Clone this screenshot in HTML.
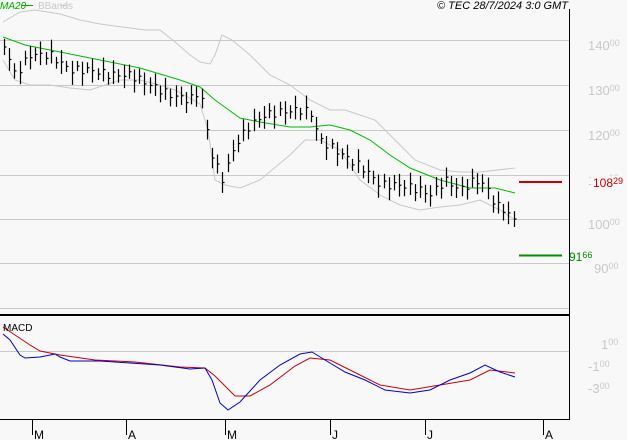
<!DOCTYPE html>
<html><head><meta charset="utf-8"><style>
html,body{margin:0;padding:0;background:#f8f8f8;width:627px;height:440px;overflow:hidden;font-family:"Liberation Sans",sans-serif}
svg{position:absolute;left:0;top:0}
</style></head><body>
<svg width="627" height="440" xmlns="http://www.w3.org/2000/svg" font-family="Liberation Sans, sans-serif">
<g stroke="#c8c8c8" stroke-width="1">
<line x1="0" y1="40.5" x2="569" y2="40.5"/><line x1="0" y1="85.5" x2="569" y2="85.5"/>
<line x1="0" y1="130.5" x2="569" y2="130.5"/><line x1="0" y1="175.5" x2="569" y2="175.5"/>
<line x1="0" y1="219.5" x2="569" y2="219.5"/><line x1="0" y1="263.5" x2="569" y2="263.5"/>
<line x1="0" y1="308.5" x2="569" y2="308.5"/><line x1="0" y1="351.5" x2="569" y2="351.5"/>
</g>
<line x1="569.5" y1="9" x2="569.5" y2="420" stroke="#000"/>
<line x1="0" y1="315" x2="569" y2="315" stroke="#000" stroke-width="2"/>
<line x1="0" y1="419.5" x2="569" y2="419.5" stroke="#000"/>
<g stroke="#000"><line x1="32.5" y1="419" x2="32.5" y2="435"/><line x1="126.5" y1="419" x2="126.5" y2="435"/><line x1="225.5" y1="419" x2="225.5" y2="435"/><line x1="330.5" y1="419" x2="330.5" y2="435"/><line x1="425.5" y1="419" x2="425.5" y2="435"/><line x1="543.5" y1="419" x2="543.5" y2="435"/></g>
<g font-size="12" fill="#000"><text x="34" y="439">M</text><text x="128" y="439">A</text><text x="227" y="439">M</text><text x="332" y="439">J</text><text x="427" y="439">J</text><text x="545" y="439">A</text></g>
<g fill="#c8c8c8" font-size="13">
<text x="588" y="50">140<tspan font-size="9" dy="-4">00</tspan></text>
<text x="588" y="95">130<tspan font-size="9" dy="-4">00</tspan></text>
<text x="588" y="140">120<tspan font-size="9" dy="-4">00</tspan></text>
<text x="588" y="185">110<tspan font-size="9" dy="-4">00</tspan></text>
<text x="588" y="229">100<tspan font-size="9" dy="-4">00</tspan></text>
<text x="594" y="273">90<tspan font-size="9" dy="-4">00</tspan></text>
<text x="601" y="349">1<tspan font-size="9" dy="-4">00</tspan></text>
<text x="588" y="371">-1<tspan font-size="9" dy="-4">00</tspan></text>
<text x="588" y="393">-3<tspan font-size="9" dy="-4">00</tspan></text></g>
<rect x="591" y="176" width="36" height="14" fill="#f8f8f8"/>
<text x="593" y="187" font-size="12" fill="#c00000">108<tspan font-size="9" dy="-3">29</tspan></text>
<text x="569" y="261" font-size="12" fill="#008800">91<tspan font-size="9" dy="-3">66</tspan></text>
<line x1="519" y1="182" x2="562" y2="182" stroke="#cc0000" stroke-width="2"/>
<line x1="519" y1="255.5" x2="562" y2="255.5" stroke="#009000" stroke-width="2"/>
<text x="0" y="9" font-size="10" fill="#00aa00" font-style="italic">MA20</text><line x1="22" y1="5.5" x2="33" y2="5.5" stroke="#00aa00"/>
<text x="38" y="9" font-size="10" fill="#c8c8c8">BBands</text><line x1="60" y1="5.5" x2="67" y2="5.5" stroke="#c8c8c8"/>
<text x="568" y="9" font-size="11" fill="#000" font-style="italic" text-anchor="end">© TEC 28/7/2024 3:0 GMT</text>
<polyline fill="none" stroke="#c8c8c8" points="3,22 20,12 35,10 60,14 80,20 100,24 130,28 145,30 160,30 175,42 190,55 200,62 210,64 215,55 222,35 232,40 250,55 270,75 290,85 310,100 330,110 345,110 360,115 375,120 390,135 400,145 415,160 440,170 460,172 480,172 515,168"/>
<polyline fill="none" stroke="#c8c8c8" points="3,60 15,80 30,85 50,85 70,88 90,90 120,80 140,80 160,85 175,90 200,104 208,130 215,180 225,185 240,188 260,180 290,155 305,140 320,140 340,150 360,180 380,195 400,205 420,210 440,207 460,205 480,200 500,210 515,220"/>
<polyline fill="none" stroke="#00bb00" points="3,37 25,45 60,52 100,60 140,68 180,80 200,87 215,100 240,118 260,122 290,127 310,127 330,125 350,130 370,140 390,155 410,168 440,180 470,188 495,188 515,193"/>
<g id="bars" stroke="#000" stroke-width="1.2"></g>
<polyline fill="none" stroke="#cc0000" points="3,327 15,335 30,345 40,351 60,355 95,360 135,362 180,367 205,368 215,376 235,396 250,396 270,385 295,366 310,358 330,360 350,370 380,385 410,390 440,385 470,380 490,370 515,373"/>
<polyline fill="none" stroke="#0000cc" points="3,334 10,340 20,355 25,358 40,357 55,354 60,357 70,361 100,361 130,363 160,365 190,369 205,368 212,380 220,403 228,410 240,402 260,380 280,365 300,354 312,352 325,360 345,372 365,380 385,390 410,393 430,390 450,380 470,373 485,365 500,372 515,377"/>
<text x="3" y="331" font-size="10" fill="#000">MACD</text>
</svg>
<script>
var pts=[[4,45],[15,75],[30,55],[50,55],[70,70],[90,70],[110,75],[130,75],[150,85],[170,95],[190,100],[200,90],[210,150],[222,180],[235,145],[250,125],[265,115],[280,112],[300,110],[310,112],[320,140],[335,150],[350,160],[365,170],[380,185],[400,185],[420,190],[430,195],[445,180],[460,190],[475,180],[485,185],[495,205],[505,210],[513,220]];
function y(x){for(var i=0;i<pts.length-1;i++){if(x<=pts[i+1][0]){var a=pts[i],b=pts[i+1];return a[1]+(b[1]-a[1])*(x-a[0])/(b[0]-a[0]);}}return 220;}
var g=document.getElementById('bars'),s='';
for(var x=4;x<=514;x+=5.2){var c=y(x)+Math.sin(x*1.7)*4,h=10+Math.abs(Math.sin(x*0.9))*14;var xi=Math.round(x)+0.5;
s+='<line x1="'+xi+'" y1="'+(c-h/2)+'" x2="'+xi+'" y2="'+(c+h/2)+'"/><line x1="'+xi+'" y1="'+c+'" x2="'+(xi+2)+'" y2="'+c+'"/>';}
g.innerHTML=s;
</script>
</body></html>
